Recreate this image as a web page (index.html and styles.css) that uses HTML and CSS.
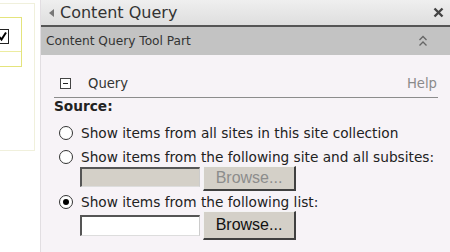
FILE: index.html
```html
<!DOCTYPE html>
<html>
<head>
<meta charset="utf-8">
<link rel="stylesheet" href="styles.css">
</head>
<body>
<div class="page">
  <div class="left">
    <div class="outer">
      <div class="inner">
        <div class="inner-top">
          <div class="chk"><svg width="11" height="11" viewBox="0 0 11 11"><path d="M2 5.5 L4.5 8.5 L9 1.5" fill="none" stroke="#000" stroke-width="2"/></svg></div>
        </div>
      </div>
    </div>
  </div>
  <div class="panel">
    <div class="titlebar">
      <span class="tri"></span>
      <span class="title">Content Query</span>
      <span class="close"><svg width="11" height="11" viewBox="0 0 11 11"><path d="M1.5 1.5 L9.5 9.5 M9.5 1.5 L1.5 9.5" stroke="#444" stroke-width="2.4"/></svg></span>
    </div>
    <div class="toolhead">
      <span class="toolname">Content Query Tool Part</span>
      <span class="chev"><svg width="10" height="12" viewBox="0 0 10 12"><path d="M1.5 5 L5 1.5 L8.5 5 M1.5 10.5 L5 7 L8.5 10.5" fill="none" stroke="#666" stroke-width="1.3"/></svg></span>
    </div>
    <div class="body">
      <div class="qrow">
        <span class="minus"><span class="bar"></span></span>
        <span class="qlabel">Query</span>
        <span class="help">Help</span>
      </div>
      <div class="source">Source:</div>
      <div class="opt opt1">
        <span class="radio"></span>
        <span class="otext">Show items from all sites in this site collection</span>
      </div>
      <div class="opt opt2">
        <span class="radio"></span>
        <span class="otext">Show items from the following site and all subsites:</span>
      </div>
      <div class="field field1">
        <span class="tbox disabled"></span>
        <span class="btn disabled">Browse...</span>
      </div>
      <div class="opt opt3">
        <span class="radio checked"><span class="dot"></span></span>
        <span class="otext">Show items from the following list:</span>
      </div>
      <div class="field field2">
        <span class="tbox"></span>
        <span class="btn">Browse...</span>
      </div>
    </div>
  </div>
</div>
</body>
</html>
```

FILE: styles.css
```css
html, body {
  margin: 0;
  padding: 0;
  background: #fff;
}
.page {
  display: flex;
  width: 450px;
  height: 252px;
  overflow: hidden;
  font-family: "DejaVu Sans", Verdana, sans-serif;
  color: #222;
}
.left {
  width: 40px;
  flex: none;
  background: #fff;
}
.outer {
  margin-top: 3px;
  width: 35px;
  height: 148px;
  box-sizing: border-box;
  border: 1px solid #f0f0dc;
  border-left: none;
  padding-top: 13px;
}
.inner {
  width: 22px;
  height: 50px;
  box-sizing: border-box;
  border: 1px solid #e4e47c;
  border-left: none;
}
.inner-top {
  height: 33px;
  border-bottom: 1px solid #ececa0;
  display: flex;
  align-items: flex-end;
}
.chk {
  width: 13px;
  height: 15px;
  box-sizing: border-box;
  border: 1.5px solid #222;
  margin-left: -4px;
  margin-bottom: 7px;
  background: #fff;
  display: flex;
  align-items: center;
  justify-content: center;
}
.panel {
  flex: 1;
  display: flex;
  flex-direction: column;
  background: #f7f3f7;
  border-left: 1px solid #e2dee2;
}
.titlebar {
  height: 25px;
  flex: none;
  display: flex;
  align-items: center;
  background: linear-gradient(#efefef, #dedede);
  border-bottom: 2px solid #555;
  padding-left: 8px;
  padding-right: 6px;
}
.tri {
  width: 0;
  height: 0;
  border-top: 4px solid transparent;
  border-bottom: 4px solid transparent;
  border-right: 5px solid #777;
  margin-right: 6px;
}
.title {
  font-size: 16px;
  color: #333;
  flex: 1;
}
.close {
  display: flex;
}
.toolhead {
  height: 28px;
  flex: none;
  display: flex;
  align-items: center;
  background: #c3c3c3;
  padding-left: 5px;
  padding-right: 22px;
}
.toolname {
  flex: 1;
  font-size: 12.2px;
  color: #333;
}
.chev {
  display: flex;
}
.body {
  padding: 18px 12px 0 13px;
}
.qrow {
  display: flex;
  align-items: center;
  height: 20px;
  border-bottom: 1px solid #8c8c8c;
  padding-bottom: 4px;
}
.minus {
  width: 9px;
  height: 9px;
  border: 1px solid #444;
  margin-left: 6px;
  margin-right: 17px;
  display: flex;
  align-items: center;
  justify-content: center;
  background: #fff;
}
.bar {
  width: 5px;
  height: 1px;
  background: #222;
}
.qlabel {
  font-size: 13.2px;
  color: #333;
  flex: 1;
}
.help {
  font-size: 13.2px;
  color: #8a8a8a;
  margin-right: 1px;
}
.source {
  font-size: 13.7px;
  font-weight: bold;
  color: #222;
  height: 16px;
  line-height: 16px;
}
.opt {
  display: flex;
  align-items: center;
  height: 20px;
  margin-left: 5px;
}
.opt1 {
  margin-top: 9px;
}
.opt2 {
  margin-top: 4px;
  height: 19px;
}
.opt3 {
  margin-top: 1px;
  height: 19px;
}
.radio {
  width: 14px;
  height: 14px;
  box-sizing: border-box;
  border: 1px solid #333;
  border-radius: 50%;
  background: #fff;
  margin-right: 8px;
  display: flex;
  align-items: center;
  justify-content: center;
}
.dot {
  width: 6px;
  height: 6px;
  border-radius: 50%;
  background: #000;
}
.otext {
  font-size: 13.7px;
  color: #222;
}
.field {
  display: flex;
  margin-left: 26px;
}
.field1 {
  align-items: flex-start;
}
.field2 {
  align-items: center;
}
.tbox {
  width: 120px;
  height: 21px;
  box-sizing: border-box;
  border-top: 2px solid #555;
  border-left: 2px solid #555;
  border-right: 1px solid #ccc;
  border-bottom: 1px solid #ddd;
  background: #fff;
}
.tbox.disabled {
  background: #d4d0c8;
  margin-top: 1px;
  height: 20px;
}
.btn {
  width: 93px;
  height: 29px;
  box-sizing: border-box;
  margin-left: 3px;
  background: #d4d0c8;
  border-top: 1px solid #f4f4f4;
  border-left: 1px solid #f4f4f4;
  border-right: 2px solid #404040;
  border-bottom: 2px solid #404040;
  font-family: "Liberation Sans", Arial, sans-serif;
  font-size: 16px;
  color: #111;
  display: flex;
  align-items: center;
  justify-content: center;
}
.btn.disabled {
  color: #8c8c8c;
  height: 25px;
}
```
